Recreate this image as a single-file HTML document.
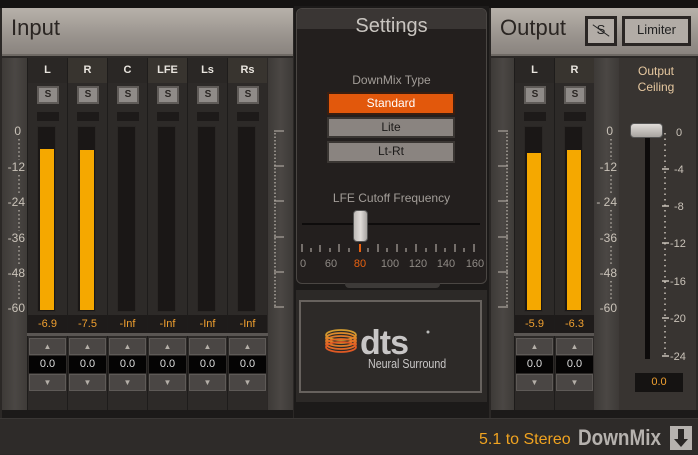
<!DOCTYPE html>
<html><head><meta charset="utf-8"><style>
*{margin:0;padding:0;box-sizing:border-box}
body{width:698px;height:454px;background:#2b2826;position:relative;overflow:hidden;font-family:"Liberation Sans",sans-serif}
.a{position:absolute}
.hdr{background:linear-gradient(#b7b1aa,#9a948e 60%,#8a847f);border-bottom:2px solid #6e6964}
.col{background:linear-gradient(90deg,#3d3a37,#4b4744 50%,#3d3a37)}
.strip{position:absolute;top:58px;width:40px;height:352px;background:#2d2a28;border-left:1px solid #1e1c1b}
.lab{position:absolute;left:0;top:0;width:39px;height:25px;color:#e8e4de;font-size:11px;font-weight:bold;text-align:center;line-height:25px}
.sb{position:absolute;left:9px;top:28px;width:22px;height:18px;background:#8f8b88;border:2px solid #5f5b58;color:#2a2623;font-size:10px;text-align:center;line-height:14px;font-weight:bold}
.dk{position:absolute;left:9px;top:54px;width:22px;height:9px;background:#1d1a19}
.tr{position:absolute;left:9px;top:68px;width:19px;height:186px;background:#1a1716;border:1px solid #2a2725}
.fl{position:absolute;left:2px;bottom:1px;width:14px;background:#f5a800}
.rd{position:absolute;left:0;top:257px;width:39px;height:18px;background:#1e1b1a;color:#f0a030;font-size:11px;text-align:center;line-height:18px}
.bt{position:absolute;left:1px;width:37px;height:17px;background:#4a4644;border:1px solid #5e5a57;color:#b4afa8;font-size:8px;text-align:center;line-height:15px}
.vl{position:absolute;left:1px;top:298px;width:37px;height:17px;background:#050404;color:#ddd;font-size:11px;text-align:center;line-height:17px}
.sc{position:absolute;color:#c9c2b8;font-size:12px}
.sbtn{background:#8a8480;border:2px solid #3a3633;color:#1c1a19;font-size:12px;text-align:center;line-height:16px}
</style></head><body>
<div class="a" style="left:0;top:0;width:698px;height:8px;background:#151312"></div>
<!-- Input -->
<div class="a hdr" style="left:2px;top:8px;width:291px;height:48px"></div>
<div class="a" style="left:11px;top:15px;font-size:22px;color:#2a2522">Input</div>
<div class="a col" style="left:2px;top:58px;width:26px;height:352px"></div>
<div class="a col" style="left:268px;top:58px;width:25px;height:352px"></div>
<div class="a" style="left:2px;top:410px;width:291px;height:8px;background:#1c1a19"></div>
<svg class="a" style="left:2px;top:120px" width="26" height="200"><g font-family="Liberation Sans" font-size="12" fill="#c9c2b8" text-anchor="end"><text x="19" y="15">0</text><text x="23" y="51">-12</text><text x="23" y="86">-24</text><text x="23" y="122">-36</text><text x="23" y="157">-48</text><text x="23" y="192">-60</text></g>
<g stroke="#a9a39c" stroke-width="1.5" stroke-dasharray="1.5 2.6"><line x1="17" y1="19" x2="17" y2="40"/><line x1="17" y1="55" x2="17" y2="75"/><line x1="17" y1="90" x2="17" y2="111"/><line x1="17" y1="126" x2="17" y2="146"/><line x1="17" y1="161" x2="17" y2="181"/></g></svg>
<svg class="a" style="left:272px;top:128px" width="16" height="182"><g stroke="#aaa39c" stroke-width="1.2"><line x1="2" y1="3" x2="12" y2="3"/><line x1="2" y1="38" x2="12" y2="38"/><line x1="2" y1="73" x2="12" y2="73"/><line x1="2" y1="109" x2="12" y2="109"/><line x1="2" y1="144" x2="12" y2="144"/><line x1="2" y1="179" x2="12" y2="179"/></g><line x1="3" y1="5" x2="3" y2="178" stroke="#a9a39c" stroke-width="1.5" stroke-dasharray="1.5 2"/></svg>

<div class="strip" style="left:27px"><div class="lab" style="background:#2a2725">L</div><div class="sb">S</div><div class="dk"></div><div class="tr"><div class="fl" style="height:161px"></div></div><div class="rd">-6.9</div><div class="bt" style="top:280px">▲</div><div class="vl">0.0</div><div class="bt" style="top:316px">▼</div></div>
<div class="strip" style="left:67px"><div class="lab" style="background:#38342f">R</div><div class="sb">S</div><div class="dk"></div><div class="tr"><div class="fl" style="height:160px"></div></div><div class="rd">-7.5</div><div class="bt" style="top:280px">▲</div><div class="vl">0.0</div><div class="bt" style="top:316px">▼</div></div>
<div class="strip" style="left:107px"><div class="lab" style="background:#2a2725">C</div><div class="sb">S</div><div class="dk"></div><div class="tr"></div><div class="rd">-Inf</div><div class="bt" style="top:280px">▲</div><div class="vl">0.0</div><div class="bt" style="top:316px">▼</div></div>
<div class="strip" style="left:147px"><div class="lab" style="background:#38342f">LFE</div><div class="sb">S</div><div class="dk"></div><div class="tr"></div><div class="rd">-Inf</div><div class="bt" style="top:280px">▲</div><div class="vl">0.0</div><div class="bt" style="top:316px">▼</div></div>
<div class="strip" style="left:187px"><div class="lab" style="background:#2a2725">Ls</div><div class="sb">S</div><div class="dk"></div><div class="tr"></div><div class="rd">-Inf</div><div class="bt" style="top:280px">▲</div><div class="vl">0.0</div><div class="bt" style="top:316px">▼</div></div>
<div class="strip" style="left:227px"><div class="lab" style="background:#38342f">Rs</div><div class="sb">S</div><div class="dk"></div><div class="tr"></div><div class="rd">-Inf</div><div class="bt" style="top:280px">▲</div><div class="vl">0.0</div><div class="bt" style="top:316px">▼</div></div>
<div class="a" style="left:27px;top:333px;width:241px;height:3px;background:#5a5653"></div>

<!-- Settings -->
<div class="a" style="left:294px;top:6px;width:195px;height:412px;background:#1c1a19"></div>
<div class="a" style="left:296px;top:8px;width:191px;height:276px;background:#231f1e;border:1px solid #4a4643;border-radius:6px"></div>
<div class="a" style="left:297px;top:9px;width:189px;height:20px;background:#3a3634;border-radius:5px 5px 0 0"></div>
<div class="a" style="left:296px;top:15px;width:191px;text-align:center;font-size:20px;color:#c9c5c0">Settings</div>
<div class="a" style="left:296px;top:73px;width:191px;text-align:center;font-size:12px;color:#a29d98">DownMix Type</div>
<div class="a" style="left:327px;top:92px;width:128px;height:23px;background:#e2580c;border:2px solid #3a1e10;color:#fff;font-size:12px;text-align:center;line-height:19px">Standard</div>
<div class="a sbtn" style="left:327px;top:117px;width:128px;height:21px">Lite</div>
<div class="a sbtn" style="left:327px;top:141px;width:128px;height:22px">Lt-Rt</div>
<div class="a" style="left:296px;top:191px;width:191px;text-align:center;font-size:12px;color:#a29d98">LFE Cutoff Frequency</div>
<div class="a" style="left:302px;top:223px;width:178px;height:2px;background:#0e0c0c"></div>
<svg class="a" style="left:298px;top:240px" width="188" height="30"><g stroke="#aaa39c" stroke-width="1.2">
<line x1="4" y1="4" x2="4" y2="12"/><line x1="13" y1="8" x2="13" y2="12"/><line x1="22" y1="5" x2="22" y2="12"/><line x1="32" y1="8" x2="32" y2="12"/><line x1="41" y1="4" x2="41" y2="12"/><line x1="51" y1="8" x2="51" y2="12"/><line x1="70" y1="8" x2="70" y2="12"/><line x1="80" y1="4" x2="80" y2="12"/><line x1="89" y1="8" x2="89" y2="12"/><line x1="99" y1="4" x2="99" y2="12"/><line x1="108" y1="8" x2="108" y2="12"/><line x1="118" y1="4" x2="118" y2="12"/><line x1="128" y1="8" x2="128" y2="12"/><line x1="138" y1="4" x2="138" y2="12"/><line x1="147" y1="8" x2="147" y2="12"/><line x1="157" y1="4" x2="157" y2="12"/><line x1="166" y1="8" x2="166" y2="12"/><line x1="176" y1="4" x2="176" y2="12"/></g>
<line x1="62" y1="4" x2="62" y2="12" stroke="#e8600f" stroke-width="2"/>
<g font-family="Liberation Sans" font-size="11" fill="#8f8a85" text-anchor="middle"><text x="5" y="27">0</text><text x="33" y="27">60</text><text x="92" y="27">100</text><text x="120" y="27">120</text><text x="148" y="27">140</text><text x="177" y="27">160</text></g><text x="62" y="27" font-family="Liberation Sans" font-size="11" fill="#e8600f" text-anchor="middle">80</text></svg>
<div class="a" style="left:353px;top:210px;width:15px;height:32px;background:linear-gradient(90deg,#bdb9b6,#e0dcd9,#a9a5a2);border-radius:4px;border:1px solid #555"></div>
<div class="a" style="left:345px;top:283px;width:95px;height:5px;background:#3d3a38;border-radius:0 0 4px 4px"></div>
<div class="a" style="left:296px;top:290px;width:191px;height:112px;background:#2c2927"></div>
<div class="a" style="left:299px;top:300px;width:183px;height:93px;border:2px solid #67625e;background:#2d2a28"></div>
<svg class="a" style="left:322px;top:326px" width="140" height="50">
<g fill="none" stroke-width="1.8"><ellipse cx="19" cy="9" rx="15" ry="5" stroke="#d09a30"/><ellipse cx="19" cy="12" rx="15" ry="5" stroke="#dd8a2a"/><ellipse cx="19" cy="15" rx="15" ry="5" stroke="#e07a28"/><ellipse cx="19" cy="18" rx="15" ry="5" stroke="#e06a26"/><ellipse cx="19" cy="21" rx="15" ry="5" stroke="#e05a24"/></g>
<text x="38" y="28" font-family="Liberation Sans" font-weight="bold" font-size="34" fill="#c8c6c6" letter-spacing="-1">dts</text>
<circle cx="106" cy="6" r="1.5" fill="#bbb"/></svg>
<div class="a" style="left:368px;top:356px;font-size:13px;color:#c8c6c6;transform:scaleX(0.82);transform-origin:left">Neural Surround</div>

<!-- Output -->
<div class="a hdr" style="left:491px;top:8px;width:207px;height:48px"></div>
<div class="a" style="left:500px;top:15px;font-size:22px;color:#2a2522">Output</div>
<div class="a" style="left:585px;top:16px;width:32px;height:30px;background:#2a2624;padding:3px"><div style="width:100%;height:100%;background:#b2aca6;font-size:13px;text-align:center;line-height:22px;color:#222;position:relative">S<div style="position:absolute;left:3px;top:11px;width:20px;height:1px;background:#222;transform:rotate(35deg)"></div></div></div>
<div class="a" style="left:622px;top:16px;width:69px;height:30px;background:#2a2624;padding:3px"><div style="width:100%;height:100%;background:#b2aca6;font-size:13px;text-align:center;line-height:22px;color:#222">Limiter</div></div>
<div class="a col" style="left:491px;top:58px;width:24px;height:352px"></div>
<div class="a col" style="left:594px;top:58px;width:25px;height:352px"></div>
<div class="a" style="left:619px;top:58px;width:77px;height:352px;background:#383431"></div>
<div class="a" style="left:491px;top:410px;width:207px;height:8px;background:#1c1a19"></div>
<svg class="a" style="left:496px;top:128px" width="16" height="182"><g stroke="#aaa39c" stroke-width="1.2"><line x1="2" y1="3" x2="12" y2="3"/><line x1="2" y1="38" x2="12" y2="38"/><line x1="2" y1="73" x2="12" y2="73"/><line x1="2" y1="109" x2="12" y2="109"/><line x1="2" y1="144" x2="12" y2="144"/><line x1="2" y1="179" x2="12" y2="179"/></g><line x1="11" y1="5" x2="11" y2="178" stroke="#a9a39c" stroke-width="1.5" stroke-dasharray="1.5 2"/></svg>
<div class="strip" style="left:514px"><div class="lab" style="background:#2a2725">L</div><div class="sb">S</div><div class="dk"></div><div class="tr"><div class="fl" style="height:157px"></div></div><div class="rd">-5.9</div><div class="bt" style="top:280px">▲</div><div class="vl">0.0</div><div class="bt" style="top:316px">▼</div></div>
<div class="strip" style="left:554px"><div class="lab" style="background:#38342f">R</div><div class="sb">S</div><div class="dk"></div><div class="tr"><div class="fl" style="height:160px"></div></div><div class="rd">-6.3</div><div class="bt" style="top:280px">▲</div><div class="vl">0.0</div><div class="bt" style="top:316px">▼</div></div>
<div class="a" style="left:514px;top:333px;width:80px;height:3px;background:#5a5653"></div>
<svg class="a" style="left:594px;top:120px" width="26" height="200"><g font-family="Liberation Sans" font-size="12" fill="#c9c2b8" text-anchor="end"><text x="19" y="15">0</text><text x="23" y="51">-12</text><text x="23" y="86">- 24</text><text x="23" y="122">-36</text><text x="23" y="157">-48</text><text x="23" y="192">-60</text></g>
<g stroke="#a9a39c" stroke-width="1.5" stroke-dasharray="1.5 2.6"><line x1="17" y1="19" x2="17" y2="40"/><line x1="17" y1="55" x2="17" y2="75"/><line x1="17" y1="90" x2="17" y2="111"/><line x1="17" y1="126" x2="17" y2="146"/><line x1="17" y1="161" x2="17" y2="181"/></g></svg>
<div class="a" style="left:620px;top:63px;width:72px;text-align:center;font-size:12px;line-height:16px;color:#e6c8a0">Output<br>Ceiling</div>
<div class="a" style="left:645px;top:137px;width:5px;height:222px;background:#0d0b0b"></div>
<div class="a" style="left:630px;top:123px;width:33px;height:15px;background:linear-gradient(#e0dcd8,#a8a4a0);border-radius:4px;border:1px solid #555"></div>
<svg class="a" style="left:660px;top:125px" width="38" height="240"><g stroke="#c9c2b8" stroke-width="1.5"><line x1="2" y1="44" x2="9" y2="44"/><line x1="2" y1="81" x2="9" y2="81"/><line x1="2" y1="118" x2="9" y2="118"/><line x1="2" y1="156" x2="9" y2="156"/><line x1="2" y1="193" x2="9" y2="193"/><line x1="2" y1="231" x2="9" y2="231"/></g><line x1="5" y1="8" x2="5" y2="232" stroke="#c9c2b8" stroke-width="1.5" stroke-dasharray="1.5 4"/>
<g font-family="Liberation Sans" font-size="11" fill="#c9c2b8"><text x="16" y="11">0</text><text x="14" y="48">-4</text><text x="14" y="85">-8</text><text x="10" y="122">-12</text><text x="10" y="160">-16</text><text x="10" y="197">-20</text><text x="10" y="235">-24</text></g></svg>
<div class="a" style="left:635px;top:373px;width:48px;height:19px;background:#151312;color:#f0a030;font-size:11px;text-align:center;line-height:19px">0.0</div>

<!-- bottom -->
<div class="a" style="left:0;top:418px;width:698px;height:36px;background:#2e2b29;border-top:1px solid #3a3735"></div>
<div class="a" style="left:479px;top:431px;font-size:16px;color:#f0a320">5.1 to Stereo</div>
<div class="a" style="left:578px;top:425px;font-size:22px;font-weight:bold;color:#b6b2ae;transform:scaleX(0.86);transform-origin:left">DownMix</div>
<div class="a" style="left:670px;top:426px;width:22px;height:24px;background:#b6b2ae"><svg width="22" height="24"><path d="M8 3h6v10h4l-7 8-7-8h4z" fill="#2a2725"/></svg></div>
</body></html>
